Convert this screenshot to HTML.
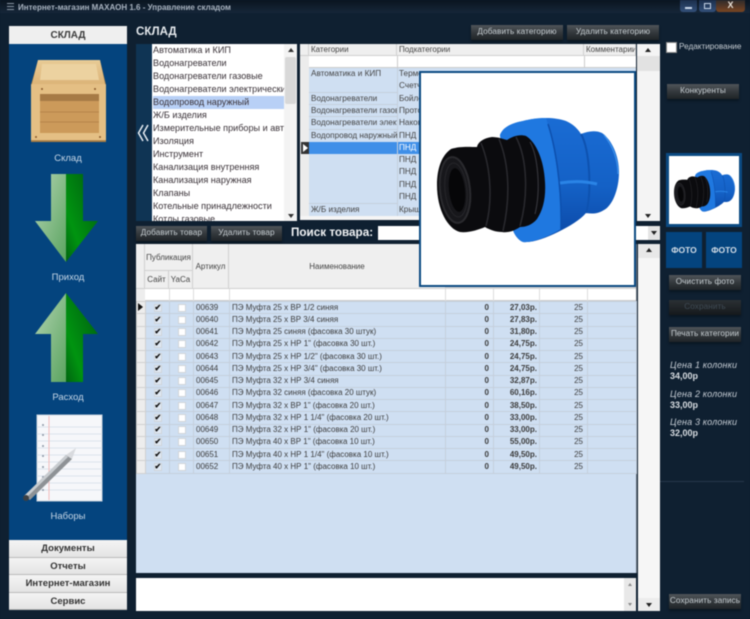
<!DOCTYPE html>
<html lang="ru"><head><meta charset="utf-8"><title>МАХАОН</title>
<style>
html,body{margin:0;padding:0;background:#0e1e2e;}
#p{position:relative;width:750px;height:619px;overflow:hidden;background:#0f2031;font-family:"Liberation Sans",sans-serif;font-size:9px;color:#333;filter:blur(.4px);}
#p div{position:absolute;box-sizing:border-box;white-space:nowrap;}
.b{background:linear-gradient(#50555a,#34393d 50%,#1f2427);color:#c5ccd0;text-align:center;font-size:8.2px;line-height:14px;height:15px;box-shadow:0 2px 2px #0a1622;letter-spacing:.1px;}
.m{left:9px;width:118px;height:17.5px;background:linear-gradient(#f4f4f4,#e4e4e4);border-bottom:1px solid #bbb;text-align:center;font-weight:bold;font-size:9.5px;line-height:18px;color:#333;}
.l{left:9px;width:118px;text-align:center;color:#c6d6e6;font-size:9.5px;line-height:12px;}
.li{left:153px;width:131px;height:13px;font-size:9.1px;line-height:13px;color:#3a3238;overflow:hidden;}
.c{font-size:8.2px;line-height:12px;color:#444;overflow:hidden;height:12px;}
.pr{left:670px;color:#c5ccd4;font-size:9px;line-height:11px;}
.pr i{letter-spacing:.15px}
.pr b{color:#d8dde2}
.h{background:#efefef;color:#444;font-size:8px;text-align:center;border-right:1px solid #d0d0d0;border-bottom:1px solid #d0d0d0;}
table{border-collapse:collapse;table-layout:fixed;position:absolute;left:136px;top:301px;width:500px;font-size:8px;color:#3c3c3c;}
td{height:12.25px;padding:0 2px;border:1px solid #c4cfdc;background:#cfdff2;white-space:nowrap;overflow:hidden;line-height:10px;box-sizing:border-box;}
td.r{background:#ededed;border-color:#d0d0d0;padding:0;}
td.n{text-align:right;padding-right:4px}
td.t{font-weight:bold;text-align:right;padding-right:2px}
td.x{text-align:center;padding:0;}
.k{display:inline-block;width:8px;height:8px;background:#fff;border:1px solid #d0d5da;vertical-align:middle;font-size:8px;line-height:6px;font-weight:bold;color:#111;text-align:center;box-sizing:border-box;}
.k.on{background:#dfe8f3;}
</style></head><body>
<div id="p">
<svg width="0" height="0" style="position:absolute"><defs>
<linearGradient id="bl" x1="0" y1="0" x2="0" y2="1"><stop offset="0" stop-color="#1a6cd4"/><stop offset=".55" stop-color="#1461c6"/><stop offset="1" stop-color="#0b47a4"/></linearGradient>
<linearGradient id="gL" x1="0" y1="0" x2="1" y2="1"><stop offset="0" stop-color="#b4d4b2"/><stop offset="1" stop-color="#5aa460"/></linearGradient>
<linearGradient id="gR" x1="1" y1="0" x2="0" y2="1"><stop offset="0" stop-color="#005a10"/><stop offset=".7" stop-color="#009410"/><stop offset="1" stop-color="#006410"/></linearGradient>
<linearGradient id="w" x1="0" y1="0" x2="0" y2="1"><stop offset="0" stop-color="#e8cb96"/><stop offset="1" stop-color="#dcb478"/></linearGradient>
<g id="pipe">
<path d="M500 135C503 127 512 123 523 121C535 118 552 116 566 121C573 124 578 129 581 134C588 131 596 130 602 133C612 140 619 156 619 172C619 190 612 206 604 210C598 214 592 214 586 213C580 220 570 226 558 232C546 238 532 243 523 242C518 240 514 234 513 230Z" fill="url(#bl)"/>
<path d="M500 135C503 127 512 123 523 121C530 119 538 118 546 118C553 140 562 185 561 229C548 237 532 243 523 242C518 240 514 234 513 230Z" fill="#1f78e0"/>
<path d="M581 134C590 150 592 195 586 213" stroke="#0e52b0" stroke-width="2" fill="none"/>
<path d="M548 124C555 145 562 185 561 229" stroke="#0d50ae" stroke-width="1.5" fill="none"/>
<path d="M560 183C572 181 585 181 597 184" stroke="#2a84e6" stroke-width="3" fill="none"/>
<path d="M604 135C613 146 618 160 618 174" stroke="#3d92ec" stroke-width="1.2" fill="none"/>
<path d="M437 185C437 168 442 155 451 149C460 146 470 147 477 147C478 142 484 138 492 137C498 137 503 139 507 140C513 136 520 134 526 136C536 142 544 160 545 182C546 198 543 210 537 219C532 225 526 227 520 227C514 231 508 233 502 232C496 232 490 230 485 227C478 230 468 233 460 232C448 229 437 210 437 185Z" fill="#0b0b0e"/>
<path d="M481 143C492 170 492 204 486 226M499 139C510 166 510 200 503 231M516 137C528 160 528 198 520 226" stroke="#2a2a2f" stroke-width="1.5" fill="none"/>
<path d="M530 142C538 156 541 190 535 214" stroke="#34343a" stroke-width="1.2" fill="none"/>
<ellipse cx="455" cy="190" rx="15" ry="33" fill="#17171b" stroke="#2a2a2e" stroke-width="2" transform="rotate(-6 455 190)"/>
<ellipse cx="456" cy="190" rx="11" ry="27" fill="none" stroke="#26262a" stroke-width="1" transform="rotate(-6 456 190)"/>
<ellipse cx="457" cy="190" rx="8" ry="22" fill="#060608" transform="rotate(-6 457 190)"/>
</g>
</defs></svg>

<!-- title bar -->
<div style="left:0;top:0;width:750px;height:13px;background:linear-gradient(#0a1420,#16273a)"></div>
<div style="left:7px;top:3px;width:7px;height:7px;border-top:1px solid #8a96a4;border-bottom:1px solid #8a96a4"></div>
<div style="left:7px;top:6px;width:7px;height:1px;background:#8a96a4"></div>
<div style="left:18px;top:3px;color:#a8b2be;font-size:8px;line-height:9px;font-weight:bold">Интернет-магазин МАХАОН 1.6 - Управление складом</div>
<div style="left:680px;top:0;width:17px;height:12px;background:linear-gradient(#1c2f4c,#33507a);border-radius:0 0 3px 3px"></div>
<div style="left:685px;top:7px;width:7px;height:2px;background:#c8d6e8"></div>
<div style="left:699px;top:0;width:17px;height:12px;background:linear-gradient(#1c2f4c,#33507a);border-radius:0 0 3px 3px"></div>
<div style="left:704px;top:3px;width:7px;height:6px;border:1px solid #c8d6e8"></div>
<div style="left:716px;top:0;width:29px;height:12px;background:linear-gradient(#2e2a2a,#7a4522);border-radius:0 0 3px 3px;color:#e8e0d8;text-align:center;font-size:9px;line-height:11px;font-weight:bold">X</div>

<!-- left panel -->
<div style="left:9px;top:26px;width:118px;height:18px;background:#efefef;text-align:center;font-weight:bold;font-size:10px;line-height:19px;color:#3c3c3c">СКЛАД</div>
<div style="left:9px;top:44px;width:118px;height:496px;background:#04447e"></div>
<svg style="position:absolute;left:0;top:0" width="130" height="540">
<path d="M38 60H100L106 85V142H31V85Z" fill="#b98a4c"/>
<path d="M38 60H100L105 84H32Z" fill="url(#w)"/>
<path d="M42 64H96L99 80H40Z" fill="#ecd2a0"/>
<rect x="31" y="84" width="75" height="57" rx="1" fill="#e4bf84"/>
<rect x="40" y="94" width="59" height="39" fill="#cc9a5a"/>
<rect x="40" y="94" width="59" height="7" fill="#a67a45"/>
<path d="M40 112H99M40 122H99" stroke="#b5854a" stroke-width="1"/>
<path d="M31 141H106" stroke="#a67a40" stroke-width="1.5"/>
<g fill="#8a5c2c"><circle cx="42" cy="89" r="1"/><circle cx="95" cy="89" r="1"/><circle cx="36" cy="137" r="1"/><circle cx="100" cy="137" r="1"/></g>
<path d="M51 174H66V262L35 221H51Z" fill="url(#gL)"/>
<path d="M66 174H83V221H98L66 262Z" fill="url(#gR)"/>
<path d="M66 293L35 334H51V382H66Z" fill="url(#gL)"/>
<path d="M66 293L98 334H83V382H66Z" fill="url(#gR)"/>
<rect x="37" y="415" width="65" height="86" fill="#f6f7fa" stroke="#c9d3de"/>
<path d="M37 427H102M37 434H102M37 441H102M37 448H102M37 455H102M37 462H102M37 469H102M37 476H102M37 483H102M37 490H102" stroke="#dce3ec" stroke-width="1"/>
<path d="M49 416V500" stroke="#f2bcbc" stroke-width="1"/>
<g fill="#8c97a6"><circle cx="43" cy="425" r="1"/><circle cx="43" cy="435" r="1"/><circle cx="43" cy="446" r="1"/><circle cx="43" cy="456" r="1"/><circle cx="43" cy="467" r="1"/><circle cx="43" cy="477" r="1"/><circle cx="43" cy="490" r="1"/></g>
<path d="M24 496L66 455L72 459L30 500Z" fill="#8e9296"/>
<path d="M24 496L66 455L68 457L26 498Z" fill="#c8ccd0"/>
<path d="M66 455L76 448L72 459Z" fill="#d8dade"/>
<circle cx="26" cy="498" r="3" fill="#3c4044"/>
</svg>
<div class="l" style="top:153px">Склад</div>
<div class="l" style="top:272px">Приход</div>
<div class="l" style="top:392px">Расход</div>
<div class="l" style="top:511px">Наборы</div>
<div class="m" style="top:540px">Документы</div>
<div class="m" style="top:557.5px">Отчеты</div>
<div class="m" style="top:575px">Интернет-магазин</div>
<div class="m" style="top:592.5px">Сервис</div>

<!-- header -->
<div style="left:136px;top:24px;color:#e6eaee;font-weight:bold;font-size:11.6px;line-height:16px">СКЛАД</div>
<div class="b" style="left:471px;top:25px;width:92px">Добавить категорию</div>
<div class="b" style="left:567px;top:25px;width:92px">Удалить категорию</div>

<!-- category list -->
<div style="left:136px;top:44px;width:16px;height:177px;background:#0f3454"></div>
<svg style="position:absolute;left:136px;top:120px" width="16" height="26"><path d="M7 5L2.5 13L7 21M12 5L7.5 13L12 21" stroke="#e8eef4" stroke-width="1.5" fill="none"/></svg>
<div style="left:152px;top:44px;width:145px;height:177px;background:#fff;overflow:hidden"></div>
<div style="left:153px;top:96px;width:131px;height:13px;background:#b8d0f6"></div>
<div class="li" style="top:44px">Автоматика и КИП</div>
<div class="li" style="top:57px">Водонагреватели</div>
<div class="li" style="top:70px">Водонагреватели газовые</div>
<div class="li" style="top:83px">Водонагреватели электрически</div>
<div class="li" style="top:96px">Водопровод наружный</div>
<div class="li" style="top:109px">Ж/Б изделия</div>
<div class="li" style="top:122px">Измерительные приборы и авт</div>
<div class="li" style="top:135px">Изоляция</div>
<div class="li" style="top:148px">Инструмент</div>
<div class="li" style="top:161px">Канализация внутренняя</div>
<div class="li" style="top:174px">Канализация наружная</div>
<div class="li" style="top:187px">Клапаны</div>
<div class="li" style="top:200px">Котельные принадлежности</div>
<div class="li" style="top:213px;height:8px">Котлы газовые</div>
<div style="left:284px;top:44px;width:13px;height:177px;background:#f3f3f3"></div>
<div style="left:285px;top:57px;width:11px;height:47px;background:#d8d8d8;border-radius:2px"></div>
<div style="left:288px;top:48px;border:3px solid transparent;border-bottom:4px solid #333;border-top:0"></div>
<div style="left:288px;top:214px;border:3px solid transparent;border-top:4px solid #333;border-bottom:0"></div>

<!-- categories grid -->
<div style="left:300px;top:44px;width:336px;height:176px;background:#f5f5f5"></div>
<div class="h" style="left:300px;top:44px;width:9px;height:12px"></div>
<div class="h" style="left:309px;top:44px;width:88px;height:12px;text-align:left;padding-left:2px;line-height:12px">Категории</div>
<div class="h" style="left:397px;top:44px;width:187px;height:12px;text-align:left;padding-left:2px;line-height:12px">Подкатегории</div>
<div class="h" style="left:584px;top:44px;width:52px;height:12px;text-align:left;padding-left:2px;line-height:12px;overflow:hidden">Комментарии</div>
<div style="left:309px;top:56px;width:327px;height:12px;background:#fff;border-bottom:1px solid #ccc"></div>
<div style="left:397px;top:56px;width:1px;height:12px;background:#ccc"></div>
<div style="left:584px;top:56px;width:1px;height:12px;background:#ccc"></div>
<div style="left:300px;top:56px;width:9px;height:160px;background:#ececec"></div>
<div style="left:309px;top:68px;width:327px;height:148px;background:#cfdff2"></div>
<div style="left:309px;top:142px;width:327px;height:12px;background:#3f8fe8"></div>
<div style="left:301px;top:142px;width:8px;height:12px;background:#333"></div>
<div style="left:303px;top:144px;border:4px solid transparent;border-left:5px solid #fff;border-right:0"></div>
<div class="c" style="left:311px;top:68px;width:86px">Автоматика и КИП</div>
<div class="c" style="left:311px;top:93px;width:86px">Водонагреватели</div>
<div class="c" style="left:311px;top:105px;width:86px">Водонагреватели газовые</div>
<div class="c" style="left:311px;top:117px;width:86px">Водонагреватели электр</div>
<div class="c" style="left:311px;top:130px;width:86px">Водопровод наружный</div>
<div class="c" style="left:311px;top:204px;width:86px">Ж/Б изделия</div>
<div class="c" style="left:399px;top:68px;width:20px">Термометры</div>
<div class="c" style="left:399px;top:80px;width:20px">Счетчики</div>
<div class="c" style="left:399px;top:93px;width:20px">Бойлеры</div>
<div class="c" style="left:399px;top:105px;width:20px">Проточные</div>
<div class="c" style="left:399px;top:117px;width:20px">Накопит</div>
<div class="c" style="left:399px;top:130px;width:20px">ПНД</div>
<div class="c" style="left:399px;top:142px;width:20px;color:#fff">ПНД</div>
<div class="c" style="left:399px;top:154px;width:20px">ПНД</div>
<div class="c" style="left:399px;top:166px;width:20px">ПНД</div>
<div class="c" style="left:399px;top:179px;width:20px">ПНД</div>
<div class="c" style="left:399px;top:191px;width:20px">ПНД</div>
<div class="c" style="left:399px;top:204px;width:20px">Крыш</div>
<div style="left:397px;top:68px;width:1px;height:148px;background:#c4cfdc"></div>
<div style="left:309px;top:92px;width:88px;height:1px;background:#c4cfdc"></div>
<div style="left:309px;top:104px;width:88px;height:1px;background:#c4cfdc"></div>
<div style="left:309px;top:116px;width:88px;height:1px;background:#c4cfdc"></div>
<div style="left:309px;top:129px;width:88px;height:1px;background:#c4cfdc"></div>
<div style="left:309px;top:203px;width:88px;height:1px;background:#c4cfdc"></div>
<div style="left:637px;top:44px;width:23px;height:177px;background:#f4f4f4"></div>
<div style="left:637px;top:56px;width:23px;height:15px;background:#e2e2e2"></div>
<div style="left:645px;top:48px;border:3px solid transparent;border-bottom:4px solid #222;border-top:0"></div>
<div style="left:645px;top:214px;border:3px solid transparent;border-top:4px solid #222;border-bottom:0"></div>

<!-- search row -->
<div class="b" style="left:136px;top:226px;width:71px">Добавить товар</div>
<div class="b" style="left:211px;top:226px;width:71px">Удалить товар</div>
<div style="left:291px;top:225px;color:#f0f2f4;font-weight:bold;font-size:11.7px;line-height:16px">Поиск товара:</div>
<div style="left:378px;top:226px;width:282px;height:14px;background:#fff"></div>
<div style="left:648px;top:226px;width:12px;height:14px;background:#e4e4e4"></div>
<div style="left:651px;top:231px;border:3px solid transparent;border-top:4px solid #222;border-bottom:0"></div>

<!-- main grid -->
<div style="left:136px;top:244px;width:501px;height:329px;background:#cfdff2;border-right:1px solid #6a7480"></div>
<div style="left:136px;top:244px;width:500px;height:45px;background:#efefef;border-bottom:2px solid #d4d4d4"></div>
<div class="h" style="left:136px;top:244px;width:9px;height:45px"></div>
<div class="h" style="left:145px;top:244px;width:48px;height:27px;line-height:27px">Публикация</div>
<div class="h" style="left:145px;top:271px;width:24px;height:18px;line-height:18px">Сайт</div>
<div class="h" style="left:169px;top:271px;width:24px;height:18px;line-height:18px">YaCa</div>
<div class="h" style="left:193px;top:244px;width:36px;height:45px;line-height:45px">Артикул</div>
<div class="h" style="left:229px;top:244px;width:217px;height:45px;line-height:45px">Наименование</div>
<div style="left:136px;top:289px;width:500px;height:12px;background:#fff;border-bottom:1px solid #ccc"></div>
<div style="left:136px;top:289px;width:9px;height:12px;background:#ededed"></div>
<div style="left:169px;top:289px;width:1px;height:12px;background:#ddd"></div>
<div style="left:193px;top:289px;width:1px;height:12px;background:#ddd"></div>
<div style="left:229px;top:289px;width:1px;height:12px;background:#ddd"></div>
<div style="left:445px;top:289px;width:1px;height:12px;background:#ddd"></div>
<div style="left:493px;top:289px;width:1px;height:12px;background:#ddd"></div>
<div style="left:539px;top:289px;width:1px;height:12px;background:#ddd"></div>
<div style="left:587px;top:289px;width:1px;height:12px;background:#ddd"></div>
<table><colgroup><col style="width:9px"><col style="width:24px"><col style="width:24px"><col style="width:36px"><col style="width:216px"><col style="width:48px"><col style="width:46px"><col style="width:48px"><col style="width:49px"></colgroup>
<tr><td class="r"></td><td class="x"><span class="k on">✔</span></td><td class="x"><span class="k"></span></td><td>00639</td><td>ПЭ Муфта 25 х ВР 1/2 синяя</td><td class="n"><b>0</b></td><td class="t">27,03р.</td><td class="n">25</td><td></td></tr>
<tr><td class="r"></td><td class="x"><span class="k on">✔</span></td><td class="x"><span class="k"></span></td><td>00640</td><td>ПЭ Муфта 25 х ВР 3/4 синяя</td><td class="n"><b>0</b></td><td class="t">27,83р.</td><td class="n">25</td><td></td></tr>
<tr><td class="r"></td><td class="x"><span class="k on">✔</span></td><td class="x"><span class="k"></span></td><td>00641</td><td>ПЭ Муфта 25 синяя (фасовка 30 штук)</td><td class="n"><b>0</b></td><td class="t">31,80р.</td><td class="n">25</td><td></td></tr>
<tr><td class="r"></td><td class="x"><span class="k on">✔</span></td><td class="x"><span class="k"></span></td><td>00642</td><td>ПЭ Муфта 25 х НР 1" (фасовка 30 шт.)</td><td class="n"><b>0</b></td><td class="t">24,75р.</td><td class="n">25</td><td></td></tr>
<tr><td class="r"></td><td class="x"><span class="k on">✔</span></td><td class="x"><span class="k"></span></td><td>00643</td><td>ПЭ Муфта 25 х НР 1/2" (фасовка 30 шт.)</td><td class="n"><b>0</b></td><td class="t">24,75р.</td><td class="n">25</td><td></td></tr>
<tr><td class="r"></td><td class="x"><span class="k on">✔</span></td><td class="x"><span class="k"></span></td><td>00644</td><td>ПЭ Муфта 25 х НР 3/4" (фасовка 30 шт.)</td><td class="n"><b>0</b></td><td class="t">24,75р.</td><td class="n">25</td><td></td></tr>
<tr><td class="r"></td><td class="x"><span class="k on">✔</span></td><td class="x"><span class="k"></span></td><td>00645</td><td>ПЭ Муфта 32 х НР 3/4 синяя</td><td class="n"><b>0</b></td><td class="t">32,87р.</td><td class="n">25</td><td></td></tr>
<tr><td class="r"></td><td class="x"><span class="k on">✔</span></td><td class="x"><span class="k"></span></td><td>00646</td><td>ПЭ Муфта 32 синяя (фасовка 20 штук)</td><td class="n"><b>0</b></td><td class="t">60,16р.</td><td class="n">25</td><td></td></tr>
<tr><td class="r"></td><td class="x"><span class="k on">✔</span></td><td class="x"><span class="k"></span></td><td>00647</td><td>ПЭ Муфта 32 х ВР 1" (фасовка 20 шт.)</td><td class="n"><b>0</b></td><td class="t">38,50р.</td><td class="n">25</td><td></td></tr>
<tr><td class="r"></td><td class="x"><span class="k on">✔</span></td><td class="x"><span class="k"></span></td><td>00648</td><td>ПЭ Муфта 32 х НР 1 1/4" (фасовка 20 шт.)</td><td class="n"><b>0</b></td><td class="t">33,00р.</td><td class="n">25</td><td></td></tr>
<tr><td class="r"></td><td class="x"><span class="k on">✔</span></td><td class="x"><span class="k"></span></td><td>00649</td><td>ПЭ Муфта 32 х НР 1" (фасовка 20 шт.)</td><td class="n"><b>0</b></td><td class="t">33,00р.</td><td class="n">25</td><td></td></tr>
<tr><td class="r"></td><td class="x"><span class="k on">✔</span></td><td class="x"><span class="k"></span></td><td>00650</td><td>ПЭ Муфта 40 х ВР 1" (фасовка 10 шт.)</td><td class="n"><b>0</b></td><td class="t">55,00р.</td><td class="n">25</td><td></td></tr>
<tr><td class="r"></td><td class="x"><span class="k on">✔</span></td><td class="x"><span class="k"></span></td><td>00651</td><td>ПЭ Муфта 40 х НР 1 1/4" (фасовка 10 шт.)</td><td class="n"><b>0</b></td><td class="t">49,50р.</td><td class="n">25</td><td></td></tr>
<tr><td class="r"></td><td class="x"><span class="k on">✔</span></td><td class="x"><span class="k"></span></td><td>00652</td><td>ПЭ Муфта 40 х НР 1" (фасовка 10 шт.)</td><td class="n"><b>0</b></td><td class="t">49,50р.</td><td class="n">25</td><td></td></tr>
</table>
<div style="left:138px;top:303px;border:4px solid transparent;border-left:5px solid #111;border-right:0"></div>

<!-- vertical scroll main -->
<div style="left:638px;top:244px;width:22px;height:367px;background:#f6f6f6"></div>
<div style="left:638px;top:244px;width:22px;height:14px;background:#e8e8e8"></div>
<div style="left:646px;top:248px;border:3px solid transparent;border-bottom:4px solid #222;border-top:0"></div>
<div style="left:638px;top:598px;width:22px;height:13px;background:#ececec"></div>
<div style="left:646px;top:603px;border:3px solid transparent;border-top:4px solid #222;border-bottom:0"></div>

<!-- memo -->
<div style="left:136px;top:578px;width:500px;height:33px;background:#fff"></div>
<div style="left:624px;top:578px;width:12px;height:33px;background:#e8e8e8"></div>
<div style="left:628px;top:583px;border:2px solid transparent;border-bottom:3px solid #888;border-top:0"></div>
<div style="left:628px;top:603px;border:2px solid transparent;border-top:3px solid #888;border-bottom:0"></div>

<!-- popup -->
<div style="left:419px;top:71px;width:217px;height:216px;background:#fff;border:2px solid #0b4a82"></div>
<svg style="position:absolute;left:0;top:0" width="750" height="619"><use href="#pipe"/></svg>

<!-- right column -->
<div style="left:666px;top:42px;width:11px;height:11px;background:#fff;border:1px solid #888"></div>
<div style="left:679px;top:41px;color:#c5ccd2;font-size:8.2px;line-height:12px">Редактирование</div>
<div class="b" style="left:667px;top:84px;width:72px">Конкуренты</div>
<div style="left:666px;top:153px;width:76px;height:74px;background:#fff;border:3px solid #0b4a82"></div>
<svg style="position:absolute;left:0;top:0" width="750" height="619"><g transform="translate(674 170) scale(.335) translate(-437 -118)"><use href="#pipe"/></g></svg>
<div style="left:666px;top:232px;width:36px;height:36px;background:#04447e;color:#d4dde6;font-weight:bold;font-size:8.5px;text-align:center;line-height:36px">ФОТО</div>
<div style="left:706px;top:232px;width:36px;height:36px;background:#04447e;color:#d4dde6;font-weight:bold;font-size:8.5px;text-align:center;line-height:36px">ФОТО</div>
<div class="b" style="left:669px;top:275px;width:72px">Очистить фото</div>
<div class="b" style="left:669px;top:300px;width:72px;background:linear-gradient(#2b3034,#15191c);color:#3e4a54">Сохранить</div>
<div class="b" style="left:669px;top:327px;width:72px">Печать категории</div>
<div class="pr" style="top:360px"><i>Цена 1 колонки</i></div>
<div class="pr" style="top:371px"><b>34,00р</b></div>
<div class="pr" style="top:389px"><i>Цена 2 колонки</i></div>
<div class="pr" style="top:400px"><b>33,00р</b></div>
<div class="pr" style="top:417px"><i>Цена 3 колонки</i></div>
<div class="pr" style="top:428px"><b>32,00р</b></div>
<div style="left:660px;top:481px;width:84px;height:1px;background:#26374a"></div>
<div class="b" style="left:669px;top:594px;width:72px">Сохранить запись</div>
</div>
</body></html>
